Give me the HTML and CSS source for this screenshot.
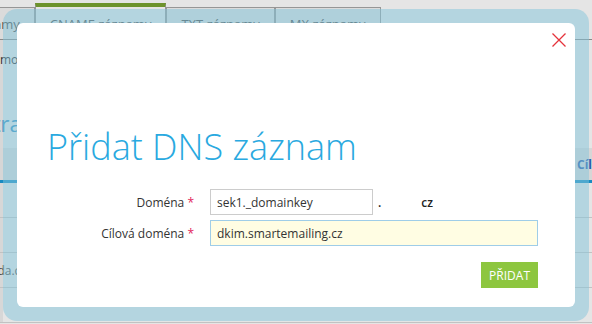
FILE: index.html
```html
<!DOCTYPE html>
<html lang="cs">
<head>
  <meta charset="UTF-8">
  <title>DNS záznamy</title>
  <link rel="stylesheet" href="styles.css">
</head>
<body>
  <div class="tabs">
    <div class="tab">A záznamy</div>
    <div class="tab active">CNAME záznamy</div>
    <div class="tab">TXT záznamy</div>
    <div class="tab">MX záznamy</div>
  </div>

  <div class="content">
    <p class="note">možnosti nastavení</p>
    <h2 class="section-title">Extra</h2>

    <div class="records">
      <div class="records-head">
        <div></div>
        <div></div>
        <div></div>
        <div>Cílová doména</div>
      </div>
      <div class="records-row"><div></div><div></div><div></div><div></div></div>
      <div class="records-row"><div></div><div></div><div></div><div></div></div>
      <div class="records-row"><div>www.moda.cz</div><div></div><div></div><div></div></div>
      <div class="records-row"><div></div><div></div><div></div><div></div></div>
    </div>
  </div>

  <div class="backdrop"></div>

  <div class="frame">
    <div class="modal">
      <div class="modal-top">
        <button class="close" title="Zavřít">
          <svg width="14" height="14" viewBox="0 0 14 14">
            <path d="M0.5 0.5 L13.5 13.5 M13.5 0.5 L0.5 13.5" stroke="#e5333b" stroke-width="1.3" fill="none"/>
          </svg>
        </button>
      </div>

      <h1 class="modal-title">Přidat DNS záznam</h1>

      <div class="form">
        <label for="domain">Doména <span class="req">*</span></label>
        <div class="field-short">
          <input id="domain" value="sek1._domainkey">
          <span class="suffix">.<span class="hidden-part"></span>cz</span>
        </div>

        <label for="target">Cílová doména <span class="req">*</span></label>
        <div class="field-wide">
          <input id="target" value="dkim.smartemailing.cz">
        </div>
      </div>

      <div class="actions">
        <button class="btn-add">Přidat</button>
      </div>
    </div>
  </div>
</body>
</html>
```

FILE: styles.css
```css
:root {
  --blue: #29a9e0;
  --green: #8dc63f;
  --tab-green: #7aa431;
  --line: #a8a8a8;
}

body {
  margin: 0;
  width: 592px;
  height: 324px;
  overflow: hidden;
  position: relative;
  font-family: 'Open Sans', 'Noto Sans', sans-serif;
  font-size: 12px;
  color: #333;
  background: #fff;
}

/* background page */
.tabs {
  display: flex;
  align-items: flex-end;
  height: 40px;
  box-sizing: border-box;
  padding-top: 3px;
  margin-left: -60px;
  border-bottom: 1px solid #999;
}

.tab {
  height: 32px;
  box-sizing: border-box;
  display: flex;
  align-items: center;
  padding: 0 14px;
  font-size: 13px;
  color: #555;
  background: #f4f4f4;
  border: 1px solid var(--line);
  border-bottom: none;
}

.tab.active {
  height: 37px;
  margin-bottom: -1px;
  background: #fff;
  border-top: 4px solid var(--tab-green);
}

.content {
  padding-top: 12px;
  box-shadow: inset 3px 0 #f0f0f0;
}

.note {
  margin: 0;
  line-height: 16px;
  color: #333;
}

.section-title {
  margin: 39px 0 0 -31px;
  font-size: 22px;
  font-weight: normal;
  line-height: 32px;
  color: #3a9fd6;
}

.records {
  margin: 9px 0 0 -60px;
}

.records-head,
.records-row {
  display: grid;
  grid-template-columns: 220px 220px 189px 1fr;
}

.records-head {
  height: 35px;
  box-sizing: border-box;
  background: #efefef;
  border-bottom: 3px solid #1b9bd7;
  align-items: center;
  font-weight: bold;
  color: #2a68bf;
}

.records-head div,
.records-row div {
  padding: 0 8px;
  white-space: nowrap;
}

.records-row {
  height: 35px;
  box-sizing: border-box;
  border-bottom: 1px solid #d9d9d9;
  align-items: center;
  color: #555;
}

.backdrop {
  position: absolute;
  inset: 0;
  background: rgba(0, 0, 0, 0.1);
}

/* dialog */
.frame {
  position: absolute;
  left: 3px;
  top: 9px;
  width: 586px;
  height: 312px;
  box-sizing: border-box;
  padding: 14px;
  border-radius: 14px;
  background: rgba(131, 197, 219, 0.5);
}

.modal {
  height: 100%;
  box-sizing: border-box;
  background: #fff;
  border-radius: 6px;
}

.modal-top {
  display: flex;
  justify-content: flex-end;
  padding: 10px 9px 0 0;
}

.close {
  display: block;
  width: 14px;
  height: 14px;
  padding: 0;
  border: none;
  background: none;
  cursor: pointer;
}

.close svg {
  display: block;
}

.modal-title {
  margin: 78px 0 0;
  padding-left: 30px;
  font-size: 36px;
  font-weight: 300;
  line-height: 44px;
  color: var(--blue);
}

.form {
  display: grid;
  grid-template-columns: 177px 328px;
  column-gap: 16px;
  row-gap: 5px;
  align-items: center;
  margin-top: 20px;
}

.form label {
  text-align: right;
  color: #333;
}

.req {
  color: #e2245b;
}

.form input {
  height: 26px;
  box-sizing: border-box;
  margin: 0;
  padding: 0 6px;
  font-family: inherit;
  font-size: 12px;
  color: #333;
  border: 1px solid #ccc;
  background: #fff;
  outline: none;
}

.field-short {
  display: flex;
  align-items: center;
  gap: 5px;
}

.field-short input {
  width: 163px;
}

.suffix {
  font-weight: 600;
  color: #222;
}

.hidden-part {
  display: inline-block;
  width: 40px;
}

.field-wide input {
  width: 100%;
  background: #fffde3;
  border-color: #9fcde8;
}

.actions {
  width: 521px;
  display: flex;
  justify-content: flex-end;
  margin-top: 16px;
}

.btn-add {
  height: 26px;
  padding: 0 8px;
  border: none;
  background: var(--green);
  color: #fff;
  font-family: inherit;
  font-size: 12px;
  text-transform: uppercase;
  cursor: pointer;
}
```
